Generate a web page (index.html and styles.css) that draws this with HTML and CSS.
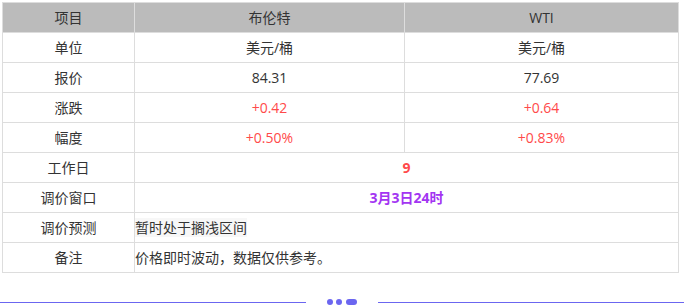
FILE: index.html
```html
<!DOCTYPE html>
<html lang="zh-CN">
<head>
  <meta charset="UTF-8">
  <meta name="viewport" content="width=device-width, initial-scale=1.0">
  <title>油价</title>
  <link rel="stylesheet" href="styles.css">
</head>
<body>
  <table class="oil-table">
    <colgroup>
      <col class="col-name">
      <col class="col-brent">
      <col>
    </colgroup>
    <thead>
      <tr>
        <th>项目</th>
        <th>布伦特</th>
        <th>WTI</th>
      </tr>
    </thead>
    <tbody>
      <tr>
        <td>单位</td>
        <td>美元/桶</td>
        <td>美元/桶</td>
      </tr>
      <tr>
        <td>报价</td>
        <td>84.31</td>
        <td>77.69</td>
      </tr>
      <tr>
        <td>涨跌</td>
        <td class="up">+0.42</td>
        <td class="up">+0.64</td>
      </tr>
      <tr>
        <td>幅度</td>
        <td class="up">+0.50%</td>
        <td class="up">+0.83%</td>
      </tr>
      <tr>
        <td>工作日</td>
        <td colspan="2" class="up strong">9</td>
      </tr>
      <tr>
        <td>调价窗口</td>
        <td colspan="2" class="window strong">3月3日24时</td>
      </tr>
      <tr>
        <td>调价预测</td>
        <td colspan="2" class="left"><span class="mark">暂时处于搁浅区间</span></td>
      </tr>
      <tr>
        <td>备注</td>
        <td colspan="2" class="left">价格即时波动，数据仅供参考。</td>
      </tr>
    </tbody>
  </table>

  <div class="divider">
    <span class="line"></span>
    <span class="dots">
      <i class="dot"></i>
      <i class="dot"></i>
      <i class="dot pill"></i>
    </span>
    <span class="line"></span>
  </div>
</body>
</html>
```

FILE: styles.css
```css
body {
  margin: 2px 0 0 0;
  font-family: "Open Sans", "Noto Sans CJK SC", "Microsoft YaHei", sans-serif;
  font-size: 14px;
  color: #333;
  background: #fff;
}

.oil-table {
  border-collapse: collapse;
  width: 677px;
  margin-left: 2px;
  table-layout: fixed;
}

.col-name {
  width: 132px;
}

.col-brent {
  width: 270px;
}

.oil-table th,
.oil-table td {
  border: 1px solid #ddd;
  height: 29px;
  padding: 0;
  text-align: center;
  font-weight: normal;
  line-height: 20px;
}

.oil-table th {
  background: #bbb;
  border-color: #ddd;
}

.oil-table td.left {
  text-align: left;
}

.up {
  color: #ff4a4a;
}

.window {
  color: #a335f2;
}

.strong {
  font-weight: bold !important;
}

.mark {
  background: #f7f7f7;
}

.divider {
  display: flex;
  align-items: center;
  margin-top: 26px;
}

.line {
  flex: 1;
  height: 1px;
  background: #6b66f0;
}

.dots {
  display: flex;
  align-items: center;
  gap: 3px;
  margin: 0 21px;
}

.dot {
  display: block;
  width: 6px;
  height: 6px;
  border-radius: 3px;
  background: #6b66f0;
}

.dot.pill {
  width: 11px;
  margin-left: 1px;
}
```
